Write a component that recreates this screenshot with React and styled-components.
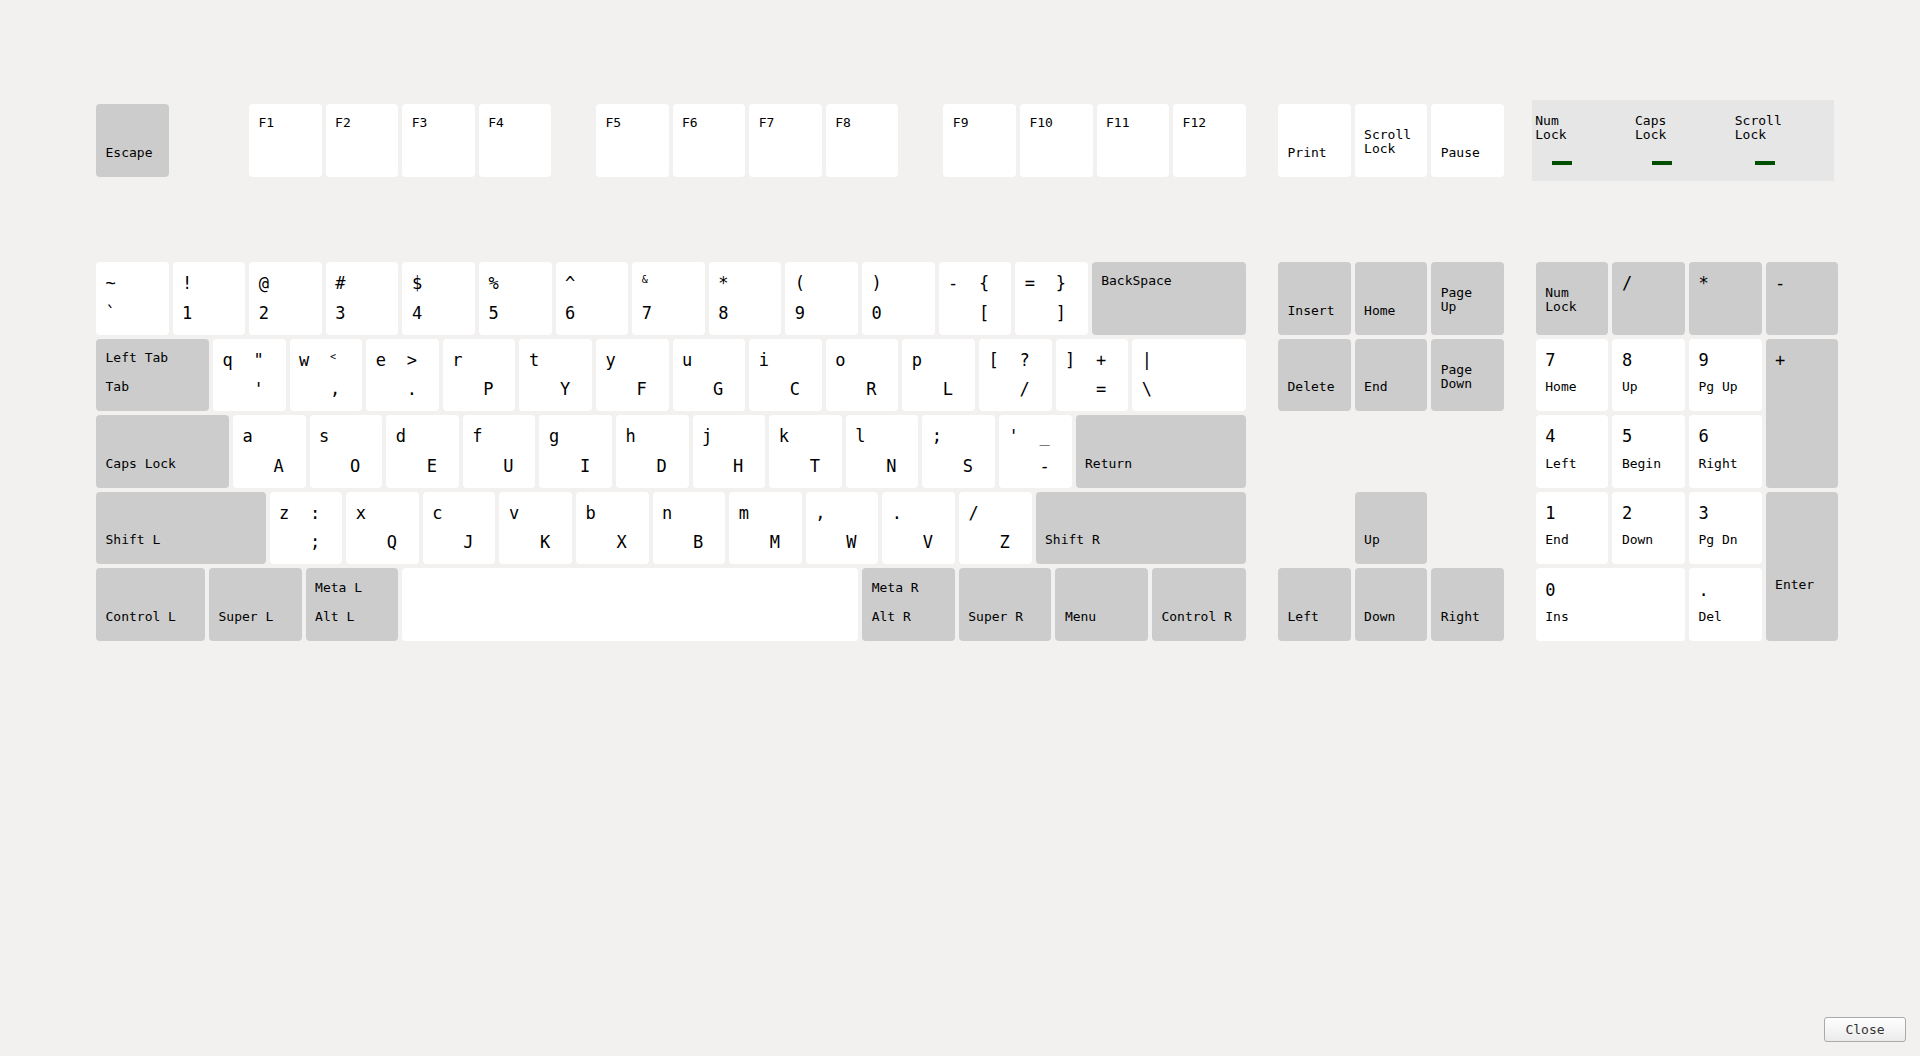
import React from 'react';
import styled, { createGlobalStyle } from 'styled-components';

const K = 72.6;
const GAP = 4;
const MONO = '"DejaVu Sans Mono", "Liberation Mono", monospace';

const GlobalStyle = createGlobalStyle`
  html, body { margin: 0; padding: 0; background: #f2f1f0; }
  body { font-family: ${MONO}; color: #000; }
`;

const Page = styled.div`
  box-sizing: border-box;
  width: 1920px;
  height: 1056px;
  padding: 100px 14px 14px 96px;
  display: flex;
  flex-direction: column;
  background: #f2f1f0;
  overflow: hidden;
`;

const TopRow = styled.div`
  display: flex;
  align-items: center;
  height: 80.7px;
`;

const FunctionSection = styled.div`
  display: flex;
  width: 1150px;
`;

const KeyGroup = styled.div`
  display: flex;
  gap: ${GAP}px;
  margin-left: ${(p) => p.$offset || 0}px;
`;

const Board = styled.div`
  display: flex;
  align-items: flex-start;
  margin-top: 81.3px;
`;

const MainBlock = styled.div`
  width: 1150px;
  display: flex;
  flex-direction: column;
  gap: ${GAP}px;
`;

const KeyRow = styled.div`
  display: flex;
  gap: ${GAP}px;
`;

const NavBlock = styled.div`
  margin-left: 32px;
  display: grid;
  grid-template-columns: repeat(3, ${K}px);
  grid-template-rows: repeat(5, ${K}px);
  gap: ${GAP}px;
`;

const NumPad = styled.div`
  margin-left: 32px;
  display: grid;
  grid-template-columns: repeat(4, ${K}px);
  grid-template-rows: repeat(5, ${K}px);
  gap: ${GAP}px;
`;

const KeyBody = styled.div`
  box-sizing: border-box;
  ${(p) =>
    p.$grow
      ? 'flex: 1 1 0; min-width: 0;'
      : p.$w
      ? `flex: 0 0 ${p.$w}px; width: ${p.$w}px;`
      : ''}
  min-height: ${K}px;
  grid-column: ${(p) => p.$gc || 'auto'};
  grid-row: ${(p) => p.$gr || 'auto'};
  display: grid;
  grid-template-columns: 31px 1fr;
  grid-template-rows: 29.5px 29.5px;
  align-content: start;
  padding: 11.2px 0 0 9.5px;
  border-radius: 4px;
  background: ${(p) => (p.$mod ? '#cccccc' : '#ffffff')};
`;

const Glyph = styled.span`
  grid-column: ${(p) => p.$c};
  grid-row: ${(p) => p.$r};
  font-size: ${(p) => p.$size || 17}px;
  line-height: 20px;
  margin-top: ${(p) => p.$dy || 0}px;
  white-space: pre;
`;

const Caption = styled.span`
  grid-column: 1 / -1;
  grid-row: ${(p) => p.$r};
  font-size: 13px;
  line-height: 15px;
  margin-top: ${(p) => p.$dy || 0}px;
  white-space: pre;
`;

const StackCaption = styled.span`
  grid-column: 1 / -1;
  grid-row: 1 / 3;
  font-size: 13px;
  line-height: 14px;
  margin-top: 13.2px;
  white-space: pre;
`;

const LockPanel = styled.div`
  margin-left: 28px;
  box-sizing: border-box;
  width: 302.7px;
  height: 80.7px;
  padding: 14px 0 0 3.5px;
  background: #e6e6e6;
  display: flex;
`;

const LockCell = styled.div`
  width: 101px;
  display: flex;
  flex-direction: column;
`;

const LockName = styled.div`
  font-size: 13px;
  line-height: 13.7px;
  white-space: pre;
`;

const LockLed = styled.div`
  width: 20px;
  height: 4px;
  margin-top: 19.6px;
  margin-left: ${(p) => p.$x}px;
  background: #004f00;
`;

const Footer = styled.div`
  margin-top: auto;
  display: flex;
  justify-content: flex-end;
`;

const CloseButton = styled.button`
  box-sizing: border-box;
  width: 82px;
  height: 25px;
  padding: 0;
  border: 1px solid #aaaaaa;
  border-radius: 3px;
  background: linear-gradient(#fefefe, #ebebeb);
  font-family: ${MONO};
  font-size: 13px;
  color: #333;
`;

const POS = { tl: [1, 1], tr: [2, 1], bl: [1, 2], br: [2, 2] };

function KeyCap({ k, w }) {
  const width = k.grow ? undefined : k.w || w;
  return (
    <KeyBody $w={width} $grow={k.grow} $mod={k.mod} $gc={k.gc} $gr={k.gr}>
      {(k.g || []).map(([pos, text, size, dy], i) => (
        <Glyph key={i} $c={POS[pos][0]} $r={POS[pos][1]} $size={size} $dy={dy}>
          {text}
        </Glyph>
      ))}
      {k.top != null && <Caption $r={1}>{k.top}</Caption>}
      {k.bottom != null && <Caption $r={2}>{k.bottom}</Caption>}
      {k.low != null && (
        <Caption $r={1} $dy={73.6}>
          {k.low}
        </Caption>
      )}
      {k.stack != null && <StackCaption>{k.stack}</StackCaption>}
    </KeyBody>
  );
}

const letter = (lo, dv) => ({ g: [['tl', lo], ['br', dv]] });
const trio = (lo, up, dv, upSize, upDy) => ({
  g: [['tl', lo], ['tr', up, upSize, upDy], ['br', dv]],
});
const pair = (up, lo, upSize, upDy) => ({ g: [['tl', up, upSize, upDy], ['bl', lo]] });

const fnKeys = (names) => names.map((n) => ({ top: n }));

const rows = [
  [
    pair('~', '`'),
    pair('!', '1'),
    pair('@', '2'),
    pair('#', '3'),
    pair('$', '4'),
    pair('%', '5'),
    pair('^', '6'),
    pair('&', '7', 10, -3),
    pair('*', '8'),
    pair('(', '9'),
    pair(')', '0'),
    trio('-', '{', '['),
    trio('=', '}', ']'),
    { top: 'BackSpace', mod: true, grow: true },
  ],
  [
    { top: 'Left Tab', bottom: 'Tab', mod: true, w: 113 },
    trio('q', '"', "'"),
    trio('w', '<', ',', 10, -3),
    trio('e', '>', '.'),
    letter('r', 'P'),
    letter('t', 'Y'),
    letter('y', 'F'),
    letter('u', 'G'),
    letter('i', 'C'),
    letter('o', 'R'),
    letter('p', 'L'),
    trio('[', '?', '/'),
    trio(']', '+', '='),
    { g: [['tl', '|'], ['bl', '\\']], grow: true },
  ],
  [
    { bottom: 'Caps Lock', mod: true, w: 133 },
    letter('a', 'A'),
    letter('s', 'O'),
    letter('d', 'E'),
    letter('f', 'U'),
    letter('g', 'I'),
    letter('h', 'D'),
    letter('j', 'H'),
    letter('k', 'T'),
    letter('l', 'N'),
    letter(';', 'S'),
    trio("'", '_', '-', 17, -0.3),
    { bottom: 'Return', mod: true, grow: true },
  ],
  [
    { bottom: 'Shift L', mod: true, w: 169.6 },
    trio('z', ':', ';'),
    letter('x', 'Q'),
    letter('c', 'J'),
    letter('v', 'K'),
    letter('b', 'X'),
    letter('n', 'B'),
    letter('m', 'M'),
    letter(',', 'W'),
    letter('.', 'V'),
    letter('/', 'Z'),
    { bottom: 'Shift R', mod: true, grow: true },
  ],
  [
    { bottom: 'Control L', mod: true, w: 109 },
    { bottom: 'Super L', mod: true, w: 92.6 },
    { top: 'Meta L', bottom: 'Alt L', mod: true, w: 92.6 },
    { w: 456 },
    { top: 'Meta R', bottom: 'Alt R', mod: true, w: 92.6 },
    { bottom: 'Super R', mod: true, w: 92.6 },
    { bottom: 'Menu', mod: true, w: 92.6 },
    { bottom: 'Control R', mod: true, grow: true },
  ],
];

const navKeys = [
  { bottom: 'Insert', mod: true },
  { bottom: 'Home', mod: true },
  { stack: 'Page\nUp', mod: true },
  { bottom: 'Delete', mod: true },
  { bottom: 'End', mod: true },
  { stack: 'Page\nDown', mod: true },
  { bottom: 'Up', mod: true, gc: '2', gr: '4' },
  { bottom: 'Left', mod: true, gc: '1', gr: '5' },
  { bottom: 'Down', mod: true, gc: '2', gr: '5' },
  { bottom: 'Right', mod: true, gc: '3', gr: '5' },
];

const padKey = (d, name) => ({ g: [['tl', d]], bottom: name });

const numKeys = [
  { stack: 'Num\nLock', mod: true },
  { g: [['tl', '/']], mod: true },
  { g: [['tl', '*']], mod: true },
  { g: [['tl', '-']], mod: true },
  padKey('7', 'Home'),
  padKey('8', 'Up'),
  padKey('9', 'Pg Up'),
  { g: [['tl', '+']], mod: true, gr: 'span 2' },
  padKey('4', 'Left'),
  padKey('5', 'Begin'),
  padKey('6', 'Right'),
  padKey('1', 'End'),
  padKey('2', 'Down'),
  padKey('3', 'Pg Dn'),
  { low: 'Enter', mod: true, gr: 'span 2' },
  { ...padKey('0', 'Ins'), gc: 'span 2' },
  padKey('.', 'Del'),
];

const locks = [
  { name: 'Num\nLock', x: 16.5 },
  { name: 'Caps\nLock', x: 16.5 },
  { name: 'Scroll\nLock', x: 20.5 },
];

export default function App() {
  return (
    <>
      <GlobalStyle />
      <Page>
        <TopRow>
          <FunctionSection>
            <KeyGroup>
              <KeyCap k={{ bottom: 'Escape', mod: true }} w={K} />
            </KeyGroup>
            <KeyGroup $offset={80.4}>
              {fnKeys(['F1', 'F2', 'F3', 'F4']).map((k, i) => (
                <KeyCap key={i} k={k} w={K} />
              ))}
            </KeyGroup>
            <KeyGroup $offset={44.6}>
              {fnKeys(['F5', 'F6', 'F7', 'F8']).map((k, i) => (
                <KeyCap key={i} k={k} w={K} />
              ))}
            </KeyGroup>
            <KeyGroup $offset={45}>
              {fnKeys(['F9', 'F10', 'F11', 'F12']).map((k, i) => (
                <KeyCap key={i} k={k} w={K} />
              ))}
            </KeyGroup>
          </FunctionSection>
          <KeyGroup $offset={32}>
            <KeyCap k={{ bottom: 'Print' }} w={K} />
            <KeyCap k={{ stack: 'Scroll\nLock' }} w={K} />
            <KeyCap k={{ bottom: 'Pause' }} w={K} />
          </KeyGroup>
          <LockPanel>
            {locks.map((l) => (
              <LockCell key={l.name}>
                <LockName>{l.name}</LockName>
                <LockLed $x={l.x} />
              </LockCell>
            ))}
          </LockPanel>
        </TopRow>

        <Board>
          <MainBlock>
            {rows.map((row, ri) => (
              <KeyRow key={ri}>
                {row.map((k, i) => (
                  <KeyCap key={i} k={k} w={K} />
                ))}
              </KeyRow>
            ))}
          </MainBlock>
          <NavBlock>
            {navKeys.map((k, i) => (
              <KeyCap key={i} k={k} />
            ))}
          </NavBlock>
          <NumPad>
            {numKeys.map((k, i) => (
              <KeyCap key={i} k={k} />
            ))}
          </NumPad>
        </Board>

        <Footer>
          <CloseButton>Close</CloseButton>
        </Footer>
      </Page>
    </>
  );
}
